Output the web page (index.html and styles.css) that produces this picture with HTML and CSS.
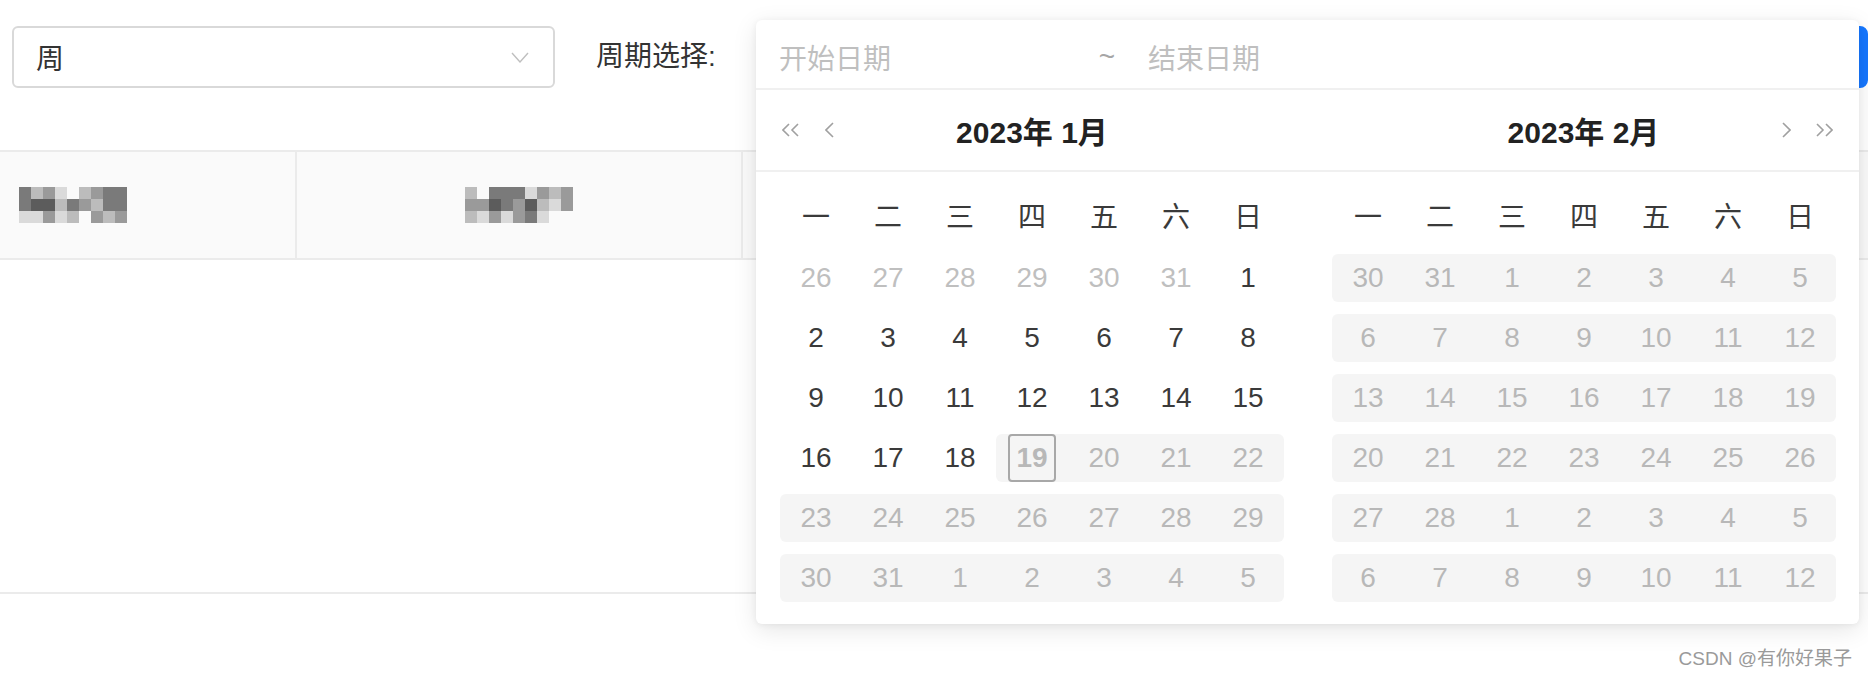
FILE: index.html
```html
<!DOCTYPE html>
<html lang="zh-CN">

<head>
    <meta charset="UTF-8">
    <meta name="viewport" content="width=device-width, initial-scale=1.0">
    <title>周期选择</title>
    <link rel="stylesheet" href="styles.css">
</head>

<body>
    <div class="page">
        <div class="toolbar">
            <div class="select">
                <span>周</span>
                <svg viewBox="0 0 18 11"><polyline points="1,1 9,10 17,1" fill="none" stroke="#bfbfbf" stroke-width="1.4"/></svg>
            </div>
            <div class="field-label">周期选择:</div>

            <div class="range">
                <div class="range-input"></div>

                <!-- dropdown of the range picker, open over the input -->
                <div class="picker">
                    <div class="picker-inputs">
                        <span class="ph-start">开始日期</span>
                        <span class="sep">~</span>
                        <span class="ph-end">结束日期</span>
                    </div>

                    <div class="panels">
                        <div class="panel">
                            <div class="panel-head">
                                <div class="nav">
                                    <span class="btn super">
                                        <svg width="20" height="14" viewBox="0 0 20 14"><polyline points="7,1 1,7 7,13"/><polyline points="16,1 10,7 16,13"/></svg>
                                    </span>
                                    <span class="btn single">
                                        <svg width="9" height="16" viewBox="0 0 9 16"><polyline points="8,1 1,8 8,15"/></svg>
                                    </span>
                                </div>
                                <div class="title">2023年 1月</div>
                                <div class="nav right"></div>
                            </div>
                            <div class="panel-body">
                                <div class="week"><span>一</span><span>二</span><span>三</span><span>四</span><span>五</span><span>六</span><span>日</span></div>
                                <div class="days">
                                    <span class="day out">26</span><span class="day out">27</span><span class="day out">28</span><span class="day out">29</span><span class="day out">30</span><span class="day out">31</span><span class="day">1</span>
                                    <span class="day">2</span><span class="day">3</span><span class="day">4</span><span class="day">5</span><span class="day">6</span><span class="day">7</span><span class="day">8</span>
                                    <span class="day">9</span><span class="day">10</span><span class="day">11</span><span class="day">12</span><span class="day">13</span><span class="day">14</span><span class="day">15</span>
                                    <span class="day">16</span><span class="day">17</span><span class="day">18</span><span class="day dis first"><span class="today">19</span></span><span class="day dis">20</span><span class="day dis">21</span><span class="day dis last">22</span>
                                    <span class="day dis first">23</span><span class="day dis">24</span><span class="day dis">25</span><span class="day dis">26</span><span class="day dis">27</span><span class="day dis">28</span><span class="day dis last">29</span>
                                    <span class="day dis first">30</span><span class="day dis">31</span><span class="day dis">1</span><span class="day dis">2</span><span class="day dis">3</span><span class="day dis">4</span><span class="day dis last">5</span>
                                </div>
                            </div>
                        </div>

                        <div class="panel">
                            <div class="panel-head">
                                <div class="nav"></div>
                                <div class="title">2023年 2月</div>
                                <div class="nav right">
                                    <span class="btn single">
                                        <svg width="9" height="16" viewBox="0 0 9 16"><polyline points="1,1 8,8 1,15"/></svg>
                                    </span>
                                    <span class="btn super">
                                        <svg width="20" height="14" viewBox="0 0 20 14"><polyline points="4,1 10,7 4,13"/><polyline points="13,1 19,7 13,13"/></svg>
                                    </span>
                                </div>
                            </div>
                            <div class="panel-body">
                                <div class="week"><span>一</span><span>二</span><span>三</span><span>四</span><span>五</span><span>六</span><span>日</span></div>
                                <div class="days">
                                    <span class="day dis first">30</span><span class="day dis">31</span><span class="day dis">1</span><span class="day dis">2</span><span class="day dis">3</span><span class="day dis">4</span><span class="day dis last">5</span>
                                    <span class="day dis first">6</span><span class="day dis">7</span><span class="day dis">8</span><span class="day dis">9</span><span class="day dis">10</span><span class="day dis">11</span><span class="day dis last">12</span>
                                    <span class="day dis first">13</span><span class="day dis">14</span><span class="day dis">15</span><span class="day dis">16</span><span class="day dis">17</span><span class="day dis">18</span><span class="day dis last">19</span>
                                    <span class="day dis first">20</span><span class="day dis">21</span><span class="day dis">22</span><span class="day dis">23</span><span class="day dis">24</span><span class="day dis">25</span><span class="day dis last">26</span>
                                    <span class="day dis first">27</span><span class="day dis">28</span><span class="day dis">1</span><span class="day dis">2</span><span class="day dis">3</span><span class="day dis">4</span><span class="day dis last">5</span>
                                    <span class="day dis first">6</span><span class="day dis">7</span><span class="day dis">8</span><span class="day dis">9</span><span class="day dis">10</span><span class="day dis">11</span><span class="day dis last">12</span>
                                </div>
                            </div>
                        </div>
                    </div>
                </div>
            </div>
        </div>

        <div class="table">
            <div class="thead">
                <div class="th col1">
                    <div class="mosaic">
                        <i class="s2"></i><i class="s4"></i><i class="s3"></i><i class="s5"></i><i class="s0"></i><i class="s4"></i><i class="s3"></i><i class="s2"></i><i class="s2"></i>
                        <i class="s2"></i><i class="s1"></i><i class="s1"></i><i class="s4"></i><i class="s2"></i><i class="s3"></i><i class="s4"></i><i class="s2"></i><i class="s2"></i>
                        <i class="s5"></i><i class="s5"></i><i class="s3"></i><i class="s5"></i><i class="s4"></i><i class="s0"></i><i class="s3"></i><i class="s4"></i><i class="s3"></i>
                    </div>
                </div>
                <div class="th col2">
                    <div class="mosaic">
                        <i class="s4"></i><i class="s0"></i><i class="s2"></i><i class="s2"></i><i class="s2"></i><i class="s5"></i><i class="s3"></i><i class="s4"></i><i class="s3"></i>
                        <i class="s3"></i><i class="s3"></i><i class="s1"></i><i class="s2"></i><i class="s3"></i><i class="s1"></i><i class="s4"></i><i class="s5"></i><i class="s3"></i>
                        <i class="s4"></i><i class="s5"></i><i class="s3"></i><i class="s5"></i><i class="s3"></i><i class="s2"></i><i class="s5"></i><i class="s0"></i><i class="s0"></i>
                    </div>
                </div>
                <div class="th col3"></div>
            </div>
            <div class="tbody"></div>
        </div>

        <div class="watermark">CSDN @有你好果子</div>
    </div>
</body>

</html>
```

FILE: styles.css
```css
* {
    box-sizing: border-box;
}

body {
    margin: 0;
    background: #fff;
    font-family: "Liberation Sans", "Noto Sans CJK SC", sans-serif;
    color: #262626;
    overflow: hidden;
}

.page {
    width: 1868px;
    height: 678px;
}

/* Top row: select, label, range picker */
.toolbar {
    display: flex;
    align-items: center;
    padding: 26px 0 0 12px;
}

.select {
    width: 543px;
    height: 62px;
    border: 2px solid #d9d9d9;
    border-radius: 6px;
    display: flex;
    align-items: center;
    justify-content: space-between;
    padding: 0 24px 0 22px;
    font-size: 28px;
    color: #333;
}

.select svg {
    width: 18px;
    height: 11px;
}

.field-label {
    width: 201px;
    padding-left: 41px;
    font-size: 28px;
    line-height: 62px;
    white-space: nowrap;
    color: #333;
}

.range {
    position: relative;
    flex: 1;
    height: 62px;
}

.range-input {
    height: 62px;
    border: 2px solid #1677ff;
    border-right-width: 9px;
    border-radius: 0 8px 8px 0;
}

/* Picker dropdown */
.picker {
    position: absolute;
    top: -6px;
    left: 0;
    width: 1103px;
    background: #fff;
    border-radius: 6px;
    box-shadow: 0 6px 24px rgba(0, 0, 0, 0.1), 0 1px 6px rgba(0, 0, 0, 0.06);
    z-index: 2;
}

.picker-inputs {
    height: 70px;
    padding: 6px 0 0 23px;
    display: flex;
    align-items: center;
    border-bottom: 2px solid #f0f0f0;
    font-size: 28px;
    color: #bfbfbf;
}

.ph-start {
    width: 308px;
}

.sep {
    width: 40px;
    text-align: center;
    color: #a6a6a6;
}

.ph-end {
    margin-left: 21px;
}

.panels {
    display: flex;
}

.panel {
    width: 552px;
}

.panel + .panel {
    width: 551px;
}

.panel-head {
    height: 82px;
    border-bottom: 2px solid #f0f0f0;
    padding: 0 16px;
    display: grid;
    grid-template-columns: 1fr auto 1fr;
    align-items: center;
}

.title {
    font-size: 30px;
    font-weight: 600;
    color: #222;
}

.nav {
    display: flex;
}

.nav.right {
    justify-content: flex-end;
}

.btn {
    height: 40px;
    display: flex;
    align-items: center;
    justify-content: center;
}

.btn.super {
    width: 40px;
}

.btn.single {
    width: 34px;
}

.btn svg polyline {
    fill: none;
    stroke: #a0a0a0;
    stroke-width: 1.6;
}

.panel-body {
    padding: 16px 24px;
}

.week,
.days {
    display: grid;
    grid-template-columns: repeat(7, 72px);
}

.week span {
    height: 60px;
    line-height: 60px;
    text-align: center;
    font-size: 28px;
    color: #3a3a3a;
}

.days {
    row-gap: 12px;
    padding: 6px 0;
}

.day {
    height: 48px;
    display: flex;
    align-items: center;
    justify-content: center;
    font-size: 28px;
    color: #3a3a3a;
}

.day.out {
    color: #bfbfbf;
}

.day.dis {
    background: #f5f5f5;
    color: #b8b8b8;
}

.day.first {
    border-radius: 6px 0 0 6px;
}

.day.last {
    border-radius: 0 6px 6px 0;
}

.today {
    width: 48px;
    height: 48px;
    border: 2px solid #a8a8a8;
    border-radius: 4px;
    display: flex;
    align-items: center;
    justify-content: center;
    font-weight: 700;
}

/* Table under the toolbar */
.table {
    margin-top: 62px;
    border-top: 2px solid #ebebeb;
    border-bottom: 2px solid #ebebeb;
}

.thead {
    display: flex;
    height: 108px;
    background: #fafafa;
    border-bottom: 2px solid #ebebeb;
}

.th {
    display: flex;
    align-items: center;
}

.th + .th {
    border-left: 2px solid #ebebeb;
}

.col1 {
    width: 295px;
    padding-left: 19px;
}

.col2 {
    width: 446px;
    justify-content: center;
}

.col3 {
    flex: 1;
}

.tbody {
    height: 332px;
}

.mosaic {
    display: grid;
    grid-template-columns: repeat(9, 12px);
    grid-auto-rows: 12px;
}

.s0 { background: #fafafa; }
.s1 { background: #5c5c5c; }
.s2 { background: #7a7a7a; }
.s3 { background: #9a9a9a; }
.s4 { background: #bcbcbc; }
.s5 { background: #dadada; }

.watermark {
    margin-top: 51px;
    text-align: right;
    padding-right: 16px;
    font-size: 19px;
    line-height: 28px;
    color: #9a9a9a;
}
```
